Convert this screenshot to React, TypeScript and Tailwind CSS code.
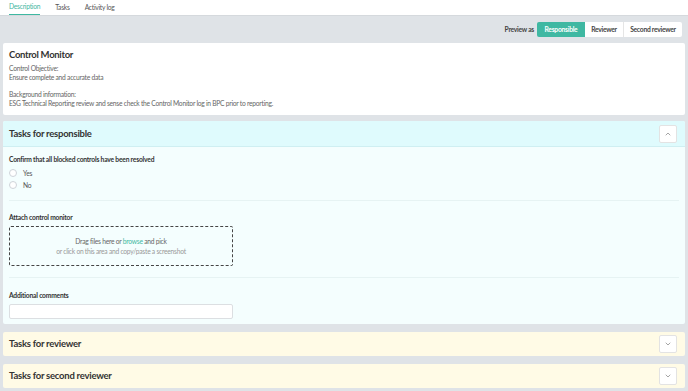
import { ChevronUp, ChevronDown } from 'lucide-react';

const font = { fontFamily: 'Lato, "Open Sans", sans-serif' };

function Radio({ label }: { label: string }) {
  return (
    <label className="flex items-center gap-[6px] h-[12px]">
      <span className="w-[8px] h-[8px] rounded-full border border-[#cfd4d9] bg-white" />
      <span className="text-[6.7px] text-[#555]">{label}</span>
    </label>
  );
}

function CollapsedSection({ title }: { title: string }) {
  return (
    <div className="mx-[3px] mt-[8px] h-[24px] rounded-[2px] bg-[#fffbe6] flex items-center justify-between pl-[6px] pr-[8px]">
      <div className="text-[9.5px] font-bold text-[#333] tracking-[-0.25px] pt-[1px]">{title}</div>
      <button className="w-[18px] h-[18px] rounded-[2px] bg-white border border-[#e3e3e3] flex items-center justify-center text-[#777]">
        <ChevronDown size={8} strokeWidth={2} />
      </button>
    </div>
  );
}

export default function App() {
  return (
    <div className="w-[688px] h-[391px] bg-[#dfe3e7] overflow-hidden tracking-[-0.25px]" style={font}>
      {/* Tabs */}
      <div className="h-[16px] bg-white border-b border-[#d5d9dd] flex items-end pl-[9px] gap-[15px] text-[6.7px]">
        <div className="text-[#3fb8a2] border-b-[1.5px] border-[#3fb8a2] pb-[3px]">Description</div>
        <div className="text-[#555] pb-[3px]">Tasks</div>
        <div className="text-[#555] pb-[3px]">Activity log</div>
      </div>

      {/* Preview as */}
      <div className="flex items-center justify-end pr-[6px] mt-[6px] h-[15px]">
        <span className="text-[6.7px] font-bold text-[#444] mr-[3px]">Preview as</span>
        <div className="flex h-[15px] text-[6.7px] font-bold">
          <div className="w-[48px] bg-[#3fb8a2] text-white flex items-center justify-center rounded-l-[2px]">Responsible</div>
          <div className="w-[39px] bg-white text-[#444] flex items-center justify-center border-r border-[#e5e5e5]">Reviewer</div>
          <div className="w-[58px] bg-white text-[#444] flex items-center justify-center rounded-r-[2px]">Second reviewer</div>
        </div>
      </div>

      {/* Control Monitor card */}
      <div className="mx-[3px] mt-[6px] bg-white rounded-[2px] px-[6px] pt-[6px] h-[72px]">
        <div className="text-[9.5px] font-bold text-[#333] leading-[12px] tracking-[-0.3px]">Control Monitor</div>
        <div className="mt-[3px] text-[6.7px] text-[#666] leading-[9px]">Control Objective:</div>
        <div className="text-[6.7px] text-[#666] leading-[9px]">Ensure complete and accurate data</div>
        <div className="mt-[8px] text-[6.7px] text-[#666] leading-[9px]">Background information:</div>
        <div className="text-[6.7px] text-[#666] leading-[9px]">
          ESG Technical Reporting review and sense check the Control Monitor log in BPC prior to reporting.
        </div>
      </div>

      {/* Tasks for responsible */}
      <div className="mx-[3px] mt-[6px] rounded-[2px] overflow-hidden bg-[#f4fefe]">
        <div className="h-[26px] bg-[#dffbfd] border-b border-[#cfeff2] flex items-center justify-between pl-[6px] pr-[8px]">
          <div className="text-[9.5px] font-bold text-[#333] tracking-[-0.25px] pt-[2px]">Tasks for responsible</div>
          <button className="w-[18px] h-[18px] rounded-[2px] bg-white border border-[#e3e3e3] flex items-center justify-center text-[#777]">
            <ChevronUp size={8} strokeWidth={2} />
          </button>
        </div>
        <div className="px-[6px] pt-[8px] pb-[5px]">
          <div className="text-[6.7px] font-bold text-[#333] leading-[9px] tracking-[-0.2px]">Confirm that all blocked controls have been resolved</div>
          <div className="mt-[3px] flex flex-col gap-0">
            <Radio label="Yes" />
            <Radio label="No" />
          </div>
          <div className="mt-[9px] border-t border-[#e6f3f3]" />
          <div className="mt-[12px] text-[6.7px] font-bold text-[#333] leading-[9px] tracking-[-0.2px]">Attach control monitor</div>
          <div className="mt-[4px] w-[224px] h-[40px] border border-dashed border-[#444] rounded-[2px] flex flex-col items-center justify-center text-[6.7px] leading-[10px]">
            <div className="text-[#666]">
              Drag files here or <span className="text-[#3fb8a2]">browse</span> and pick
            </div>
            <div className="text-[#999]">or click on this area and copy/paste a screenshot</div>
          </div>
          <div className="mt-[11px] border-t border-[#e6f3f3]" />
          <div className="mt-[13px] text-[6.7px] font-bold text-[#333] leading-[9px] tracking-[-0.2px]">Additional comments</div>
          <div className="mt-[4px] w-[224px] h-[15px] bg-white border border-[#dcdfe2] rounded-[2px]" />
        </div>
      </div>

      <CollapsedSection title="Tasks for reviewer" />
      <CollapsedSection title="Tasks for second reviewer" />
    </div>
  );
}
